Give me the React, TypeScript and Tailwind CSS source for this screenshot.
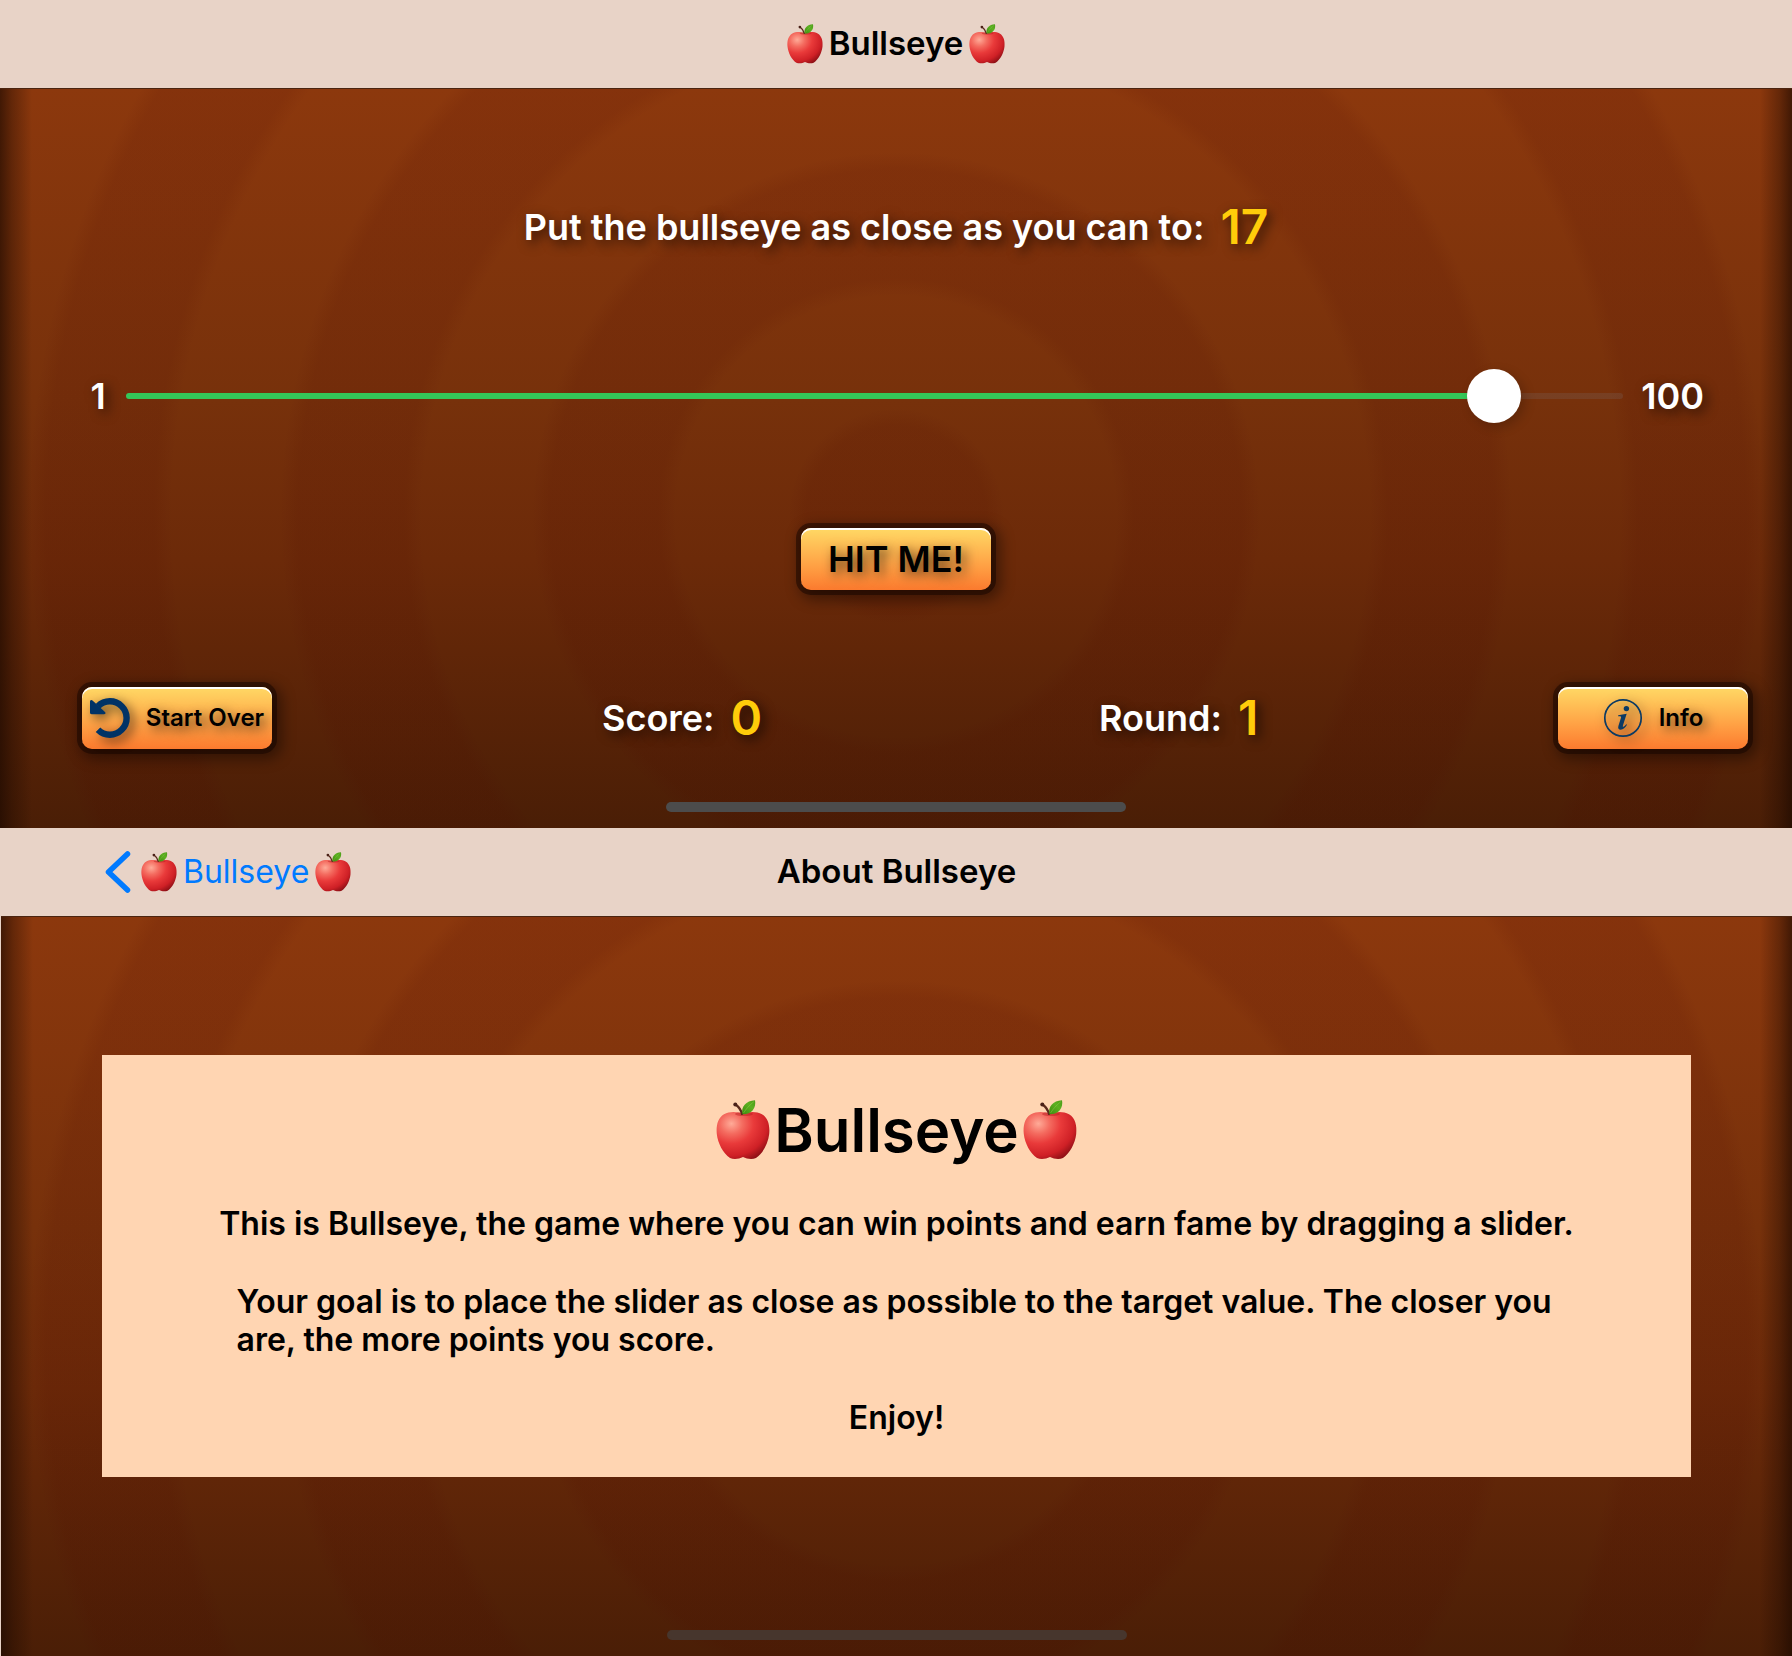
import { useState, type CSSProperties, type ReactNode } from "react";

function Apple({ className, id }: { className: string; id: string }) {
  return (
    <svg viewBox="0 0 54 60" className={className} role="img" aria-label="red apple">
      <defs>
        <radialGradient id={`${id}-skin`} cx="0.28" cy="0.25" r="0.85">
          <stop offset="0" stopColor="#ffab98" />
          <stop offset="0.25" stopColor="#f46c60" />
          <stop offset="0.5" stopColor="#e93a3a" />
          <stop offset="0.8" stopColor="#cf2026" />
          <stop offset="1" stopColor="#8e1016" />
        </radialGradient>
        <linearGradient id={`${id}-leaf`} x1="0" y1="1" x2="1" y2="0">
          <stop offset="0" stopColor="#3f8a10" />
          <stop offset="0.6" stopColor="#5cb021" />
          <stop offset="1" stopColor="#4a9a18" />
        </linearGradient>
      </defs>
      <path
        d="M27 14C22 11.500 14 10.800 8 14.200C1.500 18 0 26 .8 34C1.800 43 7 53.500 14 58C18 59.800 23 59 27 57C31 59 36 59.800 40 58C47 53.500 52.200 43 53.200 34C54 26 52.500 18 46 14.200C40 10.800 32 11.500 27 14Z"
        fill={`url(#${id}-skin)`}
      />
      <ellipse cx="28" cy="14" rx="9" ry="2" fill="#b3181c" opacity="0.45" />
      <path d="M26 14C25 10 23 7 19.500 4.500" stroke="#5a2a1c" strokeWidth="2.200" strokeLinecap="round" fill="none" />
      <circle cx="19.300" cy="4.600" r="2" fill="#4a2118" />
      <path d="M26.500 14.300C24.500 7 30 .5 39 .2C40.500 8 35.500 14.500 26.500 14.300Z" fill={`url(#${id}-leaf)`} />
      <path d="M27.500 13C30 9 33.500 5 38 1.500" stroke="#8bd04a" strokeWidth="0.800" fill="none" opacity="0.6" />
    </svg>
  );
}

function RestartIcon() {
  return (
    <svg viewBox="0 0 40 40" className="size-10 shrink-0 text-[#003366] drop-shadow-[4px_4px_6px_rgba(0,0,0,0.6)]" aria-hidden="true">
      <path d="M8 8.300A16.700 16.700 0 1 1 8 31.700" fill="none" stroke="currentColor" strokeWidth="6.400" />
      <path d="M2.500 2.500C1.500 1.500 0 2 0 3.500V14.500C0 15.700.5 16.200 1.700 16.200H14C15.600 16.200 16 15 15 14Z" fill="currentColor" />
    </svg>
  );
}

function InfoIcon() {
  return (
    <svg viewBox="0 0 40 40" className="size-10 shrink-0 text-[#0b3a63] drop-shadow-[4px_4px_6px_rgba(0,0,0,0.6)]" aria-hidden="true">
      <circle cx="20" cy="20" r="18.200" fill="none" stroke="currentColor" strokeWidth="1.700" />
      <circle cx="23.400" cy="10.600" r="2.700" fill="currentColor" />
      <path
        d="M15.200 17.200L23.700 15.800L20 27.200C19.600 28.600 20 29 20.600 28.700C21.500 28.300 22.400 27.300 23.200 26.200L24 26.800C22.300 29.600 20.200 31.700 17.700 31.700C15.600 31.700 14.700 30.200 15.400 27.900L18 19.700C18.400 18.400 17.600 18.100 15.100 18.200Z"
        fill="currentColor"
      />
    </svg>
  );
}

const glow = "[text-shadow:4px_4px_12px_rgba(0,0,0,0.65)]";

function GameButton({ children, className }: { children: ReactNode; className: string }) {
  return (
    <button
      type="button"
      className={`flex h-[62px] w-[190px] items-center justify-center rounded-[10px] bg-linear-to-b from-[#ffd965] to-[#fb7a2e] font-semibold whitespace-nowrap text-black shadow-[inset_0_2px_0_#fff,0_0_0_5px_rgba(20,4,0,0.5),4px_4px_14px_6px_rgba(0,0,0,0.4)] ${glow} ${className}`}
    >
      {children}
    </button>
  );
}

function Stat({ label, value }: { label: string; value: string }) {
  return (
    <p className={`flex items-center gap-4 font-semibold ${glow}`}>
      <span className="text-4xl text-white">{label}</span>
      <span className="text-5xl text-[#ffcc0a]">{value}</span>
    </p>
  );
}

function Wood({ children, className = "" }: { children: ReactNode; className?: string }) {
  return (
    <section
      className={`flex flex-col bg-[linear-gradient(to_right,rgba(25,8,0,0.65)_0,rgba(25,8,0,0.35)_12px,rgba(25,8,0,0)_32px,rgba(25,8,0,0)_calc(100%-32px),rgba(25,8,0,0.35)_calc(100%-12px),rgba(25,8,0,0.65)_100%),radial-gradient(circle_at_50%_516px,rgba(75,5,0,0.11)_90px,transparent_108px,transparent_220px,rgba(75,5,0,0.11)_238px,rgba(75,5,0,0.11)_346px,transparent_364px,transparent_474px,rgba(75,5,0,0.11)_492px,rgba(75,5,0,0.11)_598px,transparent_616px,transparent_724px,rgba(75,5,0,0.11)_742px,rgba(75,5,0,0.11)_850px,transparent_868px),linear-gradient(to_bottom,#8c380d_88px,#77310b_400px,#6c2a09_560px,#4a1e06_100%)] ${className}`}
    >
      {children}
    </section>
  );
}

function HomeIndicator({ className }: { className: string }) {
  return (
    <div className="mt-auto flex h-[42px] items-end justify-center pb-4">
      <div className={`h-[10px] w-[460px] rounded-full ${className}`} />
    </div>
  );
}

function Slider() {
  const [value, setValue] = useState(93);
  const fill = { "--fill": `${((value - 1) / 99) * 100}%` } as CSSProperties;
  return (
    <div className={`mt-28 flex h-[54px] items-center gap-[18px] px-[88px] text-4xl font-semibold text-white ${glow}`}>
      <label htmlFor="target" className="w-5 text-center">
        1
      </label>
      <input
        id="target"
        type="range"
        min={1}
        max={100}
        value={value}
        onChange={(e) => setValue(Number(e.target.value))}
        style={fill}
        className="h-[54px] min-w-0 flex-1 appearance-none bg-transparent [&::-webkit-slider-runnable-track]:h-[6px] [&::-webkit-slider-runnable-track]:rounded-full [&::-webkit-slider-runnable-track]:bg-[linear-gradient(to_right,#34c759_var(--fill),rgba(120,120,128,0.2)_var(--fill))] [&::-webkit-slider-thumb]:-mt-6 [&::-webkit-slider-thumb]:size-[54px] [&::-webkit-slider-thumb]:appearance-none [&::-webkit-slider-thumb]:rounded-full [&::-webkit-slider-thumb]:bg-white [&::-webkit-slider-thumb]:shadow-[4px_4px_12px_rgba(0,0,0,0.2)]"
      />
      <span>100</span>
    </div>
  );
}

const bar =
  "relative flex h-[89px] items-center justify-center border-b border-[#4a2410] bg-[#e8d3c7] text-[33px] text-black";

export default function App() {
  return (
    <div className="grid min-h-screen auto-rows-fr font-['Inter',sans-serif]">
      <Wood>
        <header className={bar}>
          <h1 className="flex items-center gap-[6px] font-semibold">
            <Apple id="a1" className="h-10 w-9" />
            Bullseye
            <Apple id="a2" className="h-10 w-9" />
          </h1>
        </header>
        <div className="mt-[108px] flex h-[60px] justify-center">
          <Stat label="Put the bullseye as close as you can to:" value="17" />
        </div>
        <Slider />
        <div className="mt-[105px] flex justify-center">
          <GameButton className="text-4xl">HIT ME!</GameButton>
        </div>
        <div className="mt-[97px] grid h-[62px] grid-cols-[520fr_497fr_459fr_190px] items-center pr-11 pl-[82px]">
          <GameButton className="gap-4 text-2xl">
            <RestartIcon />
            Start Over
          </GameButton>
          <Stat label="Score:" value="0" />
          <Stat label="Round:" value="1" />
          <GameButton className="gap-4 text-2xl">
            <InfoIcon />
            Info
          </GameButton>
        </div>
        <HomeIndicator className="bg-[#4c4c4c]" />
      </Wood>

      <Wood className="border-l border-[#e8d3c7]">
        <header className={bar}>
          <a href="#" className="absolute left-[104px] flex items-center gap-[6px] text-[32px] text-[#007aff]">
            <svg viewBox="0 0 26 42" className="mr-1 h-[42px] w-[26px]" aria-hidden="true">
              <path d="M22.500 3L3.500 21L22.500 39" fill="none" stroke="currentColor" strokeWidth="5.500" strokeLinecap="round" strokeLinejoin="round" />
            </svg>
            <Apple id="b1" className="h-10 w-9" />
            Bullseye
            <Apple id="b2" className="h-10 w-9" />
          </a>
          <h2 className="font-semibold">About Bullseye</h2>
        </header>
        <main className="flex flex-1 flex-col justify-center px-[101px]">
          <article className="flex flex-col items-center gap-10 bg-[#ffd5b2] p-10 text-[32px] leading-[38px] font-semibold text-black">
            <h3 className="flex items-center gap-1 text-6xl leading-[70px]">
              <Apple id="c1" className="h-[60px] w-[54px]" />
              Bullseye
              <Apple id="c2" className="h-[60px] w-[54px]" />
            </h3>
            <p>This is Bullseye, the game where you can win points and earn fame by dragging a slider.</p>
            <p className="max-w-[1320px]">
              Your goal is to place the slider as close as possible to the target value. The closer you are, the more points you score.
            </p>
            <p>Enjoy!</p>
          </article>
        </main>
        <HomeIndicator className="bg-[#47362d]" />
      </Wood>
    </div>
  );
}
